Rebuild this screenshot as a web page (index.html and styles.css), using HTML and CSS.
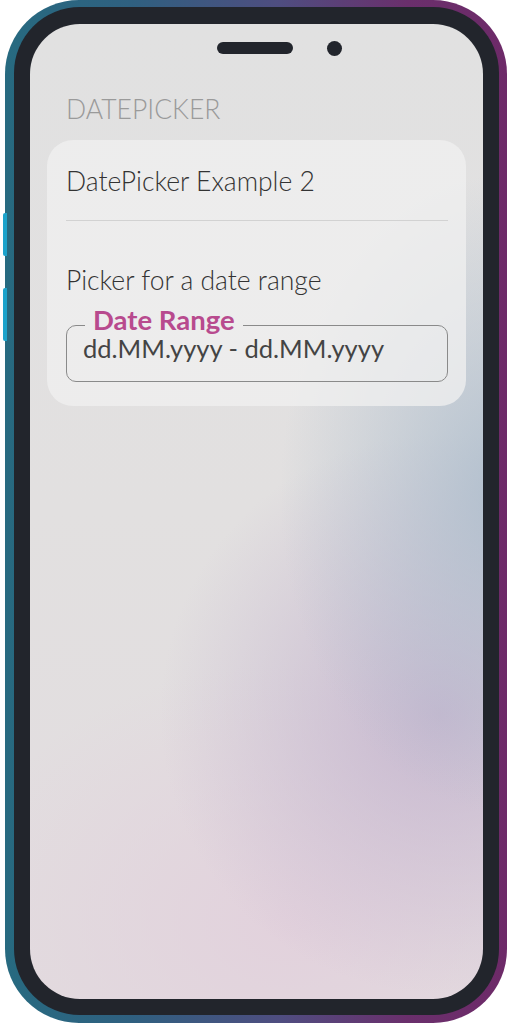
FILE: index.html
```html
<!DOCTYPE html>
<html>
<head>
<meta charset="utf-8">
<link rel="stylesheet" href="styles.css">
</head>
<body>
<div class="phone">
  <div class="btn btn-1"></div>
  <div class="btn btn-2"></div>
  <div class="bezel">
    <div class="screen">
      <div class="notch">
        <div class="speaker"></div>
        <div class="camera"></div>
      </div>
      <div class="section-title">DATEPICKER</div>
      <div class="card">
        <div class="card-title">DatePicker Example 2</div>
        <div class="divider"></div>
        <div class="label">Picker for a date range</div>
        <fieldset class="field">
          <legend class="legend">Date Range</legend>
          <div class="value">dd.MM.yyyy - dd.MM.yyyy</div>
        </fieldset>
      </div>
    </div>
  </div>
</div>
</body>
</html>
```

FILE: styles.css
```css
html, body {
  margin: 0;
  padding: 0;
  background: #ffffff;
  width: 512px;
  height: 1024px;
  overflow: hidden;
  font-family: Lato, "Noto Sans", sans-serif;
}

.phone {
  position: relative;
  margin-left: 5px;
  width: 502px;
  height: 1023px;
  box-sizing: border-box;
  padding: 7px 8px 8px 9px;
  border-radius: 74px;
  background: linear-gradient(90deg, #276a80 0%, #2f6080 25%, #4f4d80 55%, #6a2f6c 80%, #6d2a68 100%);
}

.btn {
  position: absolute;
  left: -2px;
  width: 4px;
  background: #1ca3cb;
  border-radius: 2px 0 0 2px;
}
.btn-1 { top: 213px; height: 43px; }
.btn-2 { top: 288px; height: 53px; }

.bezel {
  height: 100%;
  box-sizing: border-box;
  padding: 17px 16px 16px 16px;
  border-radius: 66px;
  background: #22252c;
}

.screen {
  height: 100%;
  border-radius: 50px;
  overflow: hidden;
  box-sizing: border-box;
  padding: 18px 17px 0 17px;
  background:
    radial-gradient(ellipse 230px 320px at 480px 470px, rgba(172, 188, 204, 0.9), rgba(172, 188, 204, 0) 100%),
    radial-gradient(ellipse 280px 280px at 410px 690px, rgba(196, 180, 206, 0.9), rgba(196, 180, 206, 0) 100%),
    radial-gradient(ellipse 340px 260px at 260px 900px, rgba(226, 208, 220, 0.9), rgba(226, 208, 220, 0) 100%),
    linear-gradient(180deg, #e1e1e1 0%, #e2e0e0 50%, #e2dcdf 100%);
}

.notch {
  display: flex;
  justify-content: center;
  align-items: center;
  gap: 34px;
  height: 12px;
  padding-left: 45px;
}
.speaker {
  width: 76px;
  height: 12px;
  border-radius: 6px;
  background: #22252c;
}
.camera {
  width: 15px;
  height: 15px;
  border-radius: 50%;
  background: #22252c;
}

.section-title {
  margin-top: 37px;
  padding-left: 19px;
  font-size: 26.5px;
  line-height: 36px;
  font-weight: 300;
  color: #9a9a9a;
}

.card {
  margin-top: 13px;
  background: rgba(240, 240, 240, 0.78);
  border-radius: 26px;
  padding: 24px 18px 24px 19px;
}

.card-title {
  font-size: 26.5px;
  line-height: 34px;
  color: #333333;
  font-weight: 300;
}

.divider {
  height: 1px;
  background: #d2d2d2;
  margin-top: 22px;
}

.label {
  margin-top: 42px;
  font-size: 26.5px;
  line-height: 34px;
  color: #333333;
  font-weight: 300;
}

.field {
  margin: 10px 0 0 0;
  padding: 0 16px 17px 16px;
  border: 1px solid #8a8a8a;
  border-radius: 10px;
  min-width: 0;
}

.legend {
  padding: 0 8px 10px 8px;
  margin-left: 2px;
  font-size: 27.5px;
  line-height: 26px;
  font-weight: 700;
  color: #b84a8e;
}

.value {
  margin-top: -11px;
  font-size: 25.5px;
  line-height: 32px;
  color: #444444;
}
```
